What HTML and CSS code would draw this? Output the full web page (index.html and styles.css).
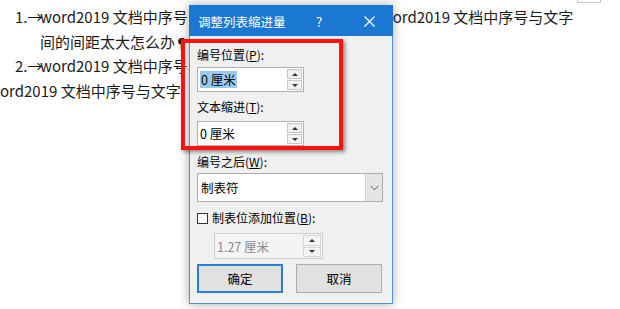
FILE: index.html
```html
<!DOCTYPE html>
<html lang="zh">
<head>
<meta charset="utf-8">
<link rel="stylesheet" href="styles.css">
</head>
<body>
<div class="doc">
  <div class="line l1"><span class="num">1.→</span>word2019 文档中序号<span class="gap"></span>word2019 文档中序号与文字</div>
  <div class="line l2">间的间距太大怎么办<span class="pil">¶</span></div>
  <div class="line l1"><span class="num">2.→</span>word2019 文档中序号与文字间的间距</div>
  <div class="line l4">word2019 文档中序号与文字</div>
</div>
<div class="corner"></div>

<div class="dialog">
  <div class="titlebar">
    <span class="title">调整列表缩进量</span>
    <span class="help">?</span>
    <span class="close">
      <svg width="11" height="11" viewBox="0 0 11 11"><path d="M0.5 0.5L10.5 10.5M10.5 0.5L0.5 10.5" stroke="#fff" stroke-width="1.2" fill="none"/></svg>
    </span>
  </div>
  <div class="body">
    <div class="label lb1">编号位置(<u>P</u>):</div>
    <div class="spin sp1">
      <div class="field"><span class="sel">0 厘米</span></div>
      <div class="arrows"><span class="up"></span><span class="down"></span></div>
    </div>
    <div class="label lb2">文本缩进(<u>T</u>):</div>
    <div class="spin sp2">
      <div class="field"><span>0 厘米</span></div>
      <div class="arrows"><span class="up"></span><span class="down"></span></div>
    </div>
    <div class="label lb3">编号之后(<u>W</u>):</div>
    <div class="select">
      <div class="sfield">制表符</div>
      <div class="sbtn">
        <svg width="9" height="6" viewBox="0 0 9 6"><path d="M0.5 0.8L4.5 4.8L8.5 0.8" stroke="#555" stroke-width="1" fill="none"/></svg>
      </div>
    </div>
    <div class="check">
      <span class="box"></span>
      <span>制表位添加位置(<u>B</u>):</span>
    </div>
    <div class="spin sp3 disabled">
      <div class="field"><span>1.27 厘米</span></div>
      <div class="arrows"><span class="up"></span><span class="down"></span></div>
    </div>
    <div class="buttons">
      <div class="btn default">确定</div>
      <div class="btn">取消</div>
    </div>
  </div>
</div>

<div class="redbox"></div>
</body>
</html>
```

FILE: styles.css
```css
html, body {
  margin: 0;
  padding: 0;
  background: #fff;
  width: 620px;
  height: 309px;
  overflow: hidden;
  font-family: "Noto Sans CJK SC", "Noto Sans", sans-serif;
}

.doc {
  padding-top: 5px;
  font-size: 15px;
  color: #1a1a1a;
}

.line {
  height: 24.5px;
  line-height: 24px;
  white-space: nowrap;
}

.l1 {
  padding-left: 15px;
}

.num {
  display: inline-block;
  width: 25px;
}

.gap {
  display: inline-block;
  width: 193px;
}

.l2 {
  padding-left: 40px;
}

.pil {
  font-size: 13px;
  font-weight: bold;
}

.l4 {
  margin-left: -12px;
}

.corner {
  position: absolute;
  top: -2px;
  left: 577px;
  width: 22px;
  height: 3px;
  border: 1px solid #c8c8c8;
}

.dialog {
  position: absolute;
  left: 189px;
  top: 5px;
  width: 202px;
  height: 297px;
  border: 1px solid #4f95d8;
  background: #f0f0f0;
  box-shadow: 0 0 10px rgba(0, 0, 0, 0.35);
  font-size: 12px;
  color: #000;
  display: flex;
  flex-direction: column;
}

.titlebar {
  height: 30px;
  background: #1a78d2;
  color: #fff;
  display: flex;
  align-items: center;
  margin: -1px -1px 0 -1px;
  padding-top: 1px;
}

.title {
  padding-left: 9px;
  font-size: 12.5px;
  flex: 1;
}

.help {
  width: 20px;
  text-align: center;
  font-size: 13px;
  margin-right: 30px;
}

.close {
  width: 20px;
  display: flex;
  justify-content: center;
  margin-right: 14px;
}

.body {
  padding: 0 9px 0 7px;
  display: flex;
  flex-direction: column;
  align-items: flex-start;
}

.label {
  line-height: 16px;
  height: 16px;
}

.lb1 { margin-top: 11px; }
.lb2 { margin-top: 7px; }
.lb3 { margin-top: 8px; }

.spin {
  display: flex;
  border: 1px solid #b0b0b0;
  background: #fff;
  box-sizing: border-box;
}

.sp1 { margin-top: 4px; width: 107px; height: 25px; }
.sp2 { margin-top: 6px; width: 107px; height: 25px; }
.sp3 { margin-top: 7px; margin-left: 17px; width: 109px; height: 26px; }

.field {
  flex: 1;
  display: flex;
  align-items: center;
  padding-left: 2px;
  font-size: 12.5px;
}

.sel {
  background: #99c9ef;
  padding: 0 1px;
  line-height: 17px;
}

.arrows {
  width: 15px;
  display: flex;
  flex-direction: column;
  gap: 1px;
  padding: 1px 1px 1px 0;
}

.arrows span {
  flex: 1;
  background: #f0f0f0;
  border: 1px solid #c8c8c8;
  display: flex;
  align-items: center;
  justify-content: center;
}

.arrows .up::after {
  content: "";
  border-left: 3px solid transparent;
  border-right: 3px solid transparent;
  border-bottom: 3px solid #333;
}

.arrows .down::after {
  content: "";
  border-left: 3px solid transparent;
  border-right: 3px solid transparent;
  border-top: 3px solid #333;
}

.sp3 .arrows {
  width: 18px;
}

.disabled {
  background: #f4f4f4;
  border-color: #cfcfcf;
  color: #8a8a8a;
}

.disabled .arrows span {
  background: #f4f4f4;
  border-color: #d6d6d6;
}

.select {
  margin-top: 3px;
  width: 186px;
  height: 29px;
  box-sizing: border-box;
  border: 1px solid #acacac;
  background: #fff;
  display: flex;
}

.sfield {
  flex: 1;
  display: flex;
  align-items: center;
  padding-left: 3px;
  font-size: 12.5px;
}

.sbtn {
  width: 16px;
  background: #e5e5e5;
  border-left: 1px solid #d0d0d0;
  display: flex;
  align-items: center;
  justify-content: center;
}

.check {
  margin-top: 8px;
  display: flex;
  align-items: center;
  gap: 4px;
  line-height: 16px;
}

.box {
  width: 9px;
  height: 9px;
  border: 1px solid #333;
  background: #fff;
}

.buttons {
  margin-top: 5px;
  display: flex;
  gap: 13px;
}

.btn {
  width: 86px;
  height: 29px;
  box-sizing: border-box;
  background: #e1e1e1;
  border: 1px solid #adadad;
  display: flex;
  align-items: center;
  justify-content: center;
  font-size: 12.5px;
}

.btn.default {
  border: 2px solid #2a7fd4;
}

.redbox {
  position: absolute;
  left: 181px;
  top: 39px;
  width: 154px;
  height: 103px;
  border: 4px solid #ff1010;
  box-shadow: 2px 2px 4px rgba(0, 0, 0, 0.45);
}
```
